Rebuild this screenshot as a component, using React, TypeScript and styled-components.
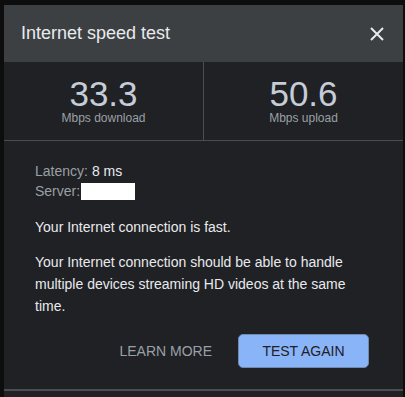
import React from "react";
import styled, { createGlobalStyle } from "styled-components";

const Global = createGlobalStyle`
  html, body { margin: 0; padding: 0; background: #0d0d0e; }
  body { font-family: "Liberation Sans", Arial, sans-serif; overflow: hidden; }
`;

const Page = styled.div`
  width: 405px;
  height: 397px;
  padding: 5px 0 0 4px;
  box-sizing: border-box;
  overflow: hidden;
`;

const Dialog = styled.div`
  width: 399px;
  background: #202124;
  display: flex;
  flex-direction: column;
`;

const Header = styled.div`
  height: 57px;
  background: #3c4043;
  display: flex;
  align-items: center;
  justify-content: space-between;
  padding: 0 14px 0 17px;
  box-sizing: border-box;
`;

const Title = styled.h1`
  margin: 0;
  font-size: 18px;
  font-weight: 400;
  color: #e8eaed;
`;

const Close = styled.button`
  width: 24px;
  height: 24px;
  padding: 0;
  border: 0;
  background: none;
  display: flex;
  align-items: center;
  justify-content: center;
  cursor: pointer;
`;

const Stats = styled.div`
  display: grid;
  grid-template-columns: 200px 1fr;
  border-bottom: 1px solid #4a4d51;
`;

const Stat = styled.div<{ $divider?: boolean }>`
  height: 78px;
  display: flex;
  flex-direction: column;
  align-items: center;
  padding-top: 14px;
  box-sizing: border-box;
  border-right: ${(p) => (p.$divider ? "1px solid #4a4d51" : "0")};
`;

const Value = styled.div`
  font-size: 35px;
  line-height: 36px;
  color: #c5cdd8;
`;

const Unit = styled.div`
  font-size: 12px;
  line-height: 12px;
  color: #9aa0a6;
`;

const Body = styled.div`
  padding: 20px 34px 0 31px;
  display: flex;
  flex-direction: column;
`;

const InfoLine = styled.div`
  font-size: 14px;
  line-height: 20px;
  color: #9aa0a6;
  display: flex;
  align-items: center;
`;

const InfoValue = styled.span`
  color: #e8eaed;
  margin-left: 4px;
`;

const Redacted = styled.span`
  display: inline-block;
  width: 54px;
  height: 17px;
  background: #ffffff;
  margin-left: 1px;
`;

const Para = styled.p`
  margin: 0;
  font-size: 14px;
  line-height: 22px;
  color: #e8eaed;
`;

const FirstPara = styled(Para)`
  margin-top: 15px;
`;

const SecondPara = styled(Para)`
  margin-top: 13px;
`;

const Actions = styled.div`
  display: flex;
  justify-content: flex-end;
  align-items: center;
  gap: 26px;
  margin-top: 17px;
`;

const TextButton = styled.button`
  border: 0;
  background: none;
  padding: 0;
  font-family: inherit;
  font-size: 14px;
  color: #9aa0a6;
  text-transform: uppercase;
  cursor: pointer;
`;

const PrimaryButton = styled.button`
  width: 131px;
  height: 34px;
  border: 1px solid #7089b0;
  border-radius: 5px;
  background: #8ab4f8;
  color: #202124;
  font-family: inherit;
  font-size: 14px;
  text-transform: uppercase;
  cursor: pointer;
`;

const Footer = styled.div`
  margin-top: 21px;
  height: 40px;
  border-top: 2px solid #4a4d51;
`;

export default function App() {
  return (
    <>
      <Global />
      <Page>
        <Dialog>
          <Header>
            <Title>Internet speed test</Title>
            <Close aria-label="Close">
              <svg width="14" height="14" viewBox="0 0 14 14">
                <path d="M1 1L13 13M13 1L1 13" stroke="#e8eaed" strokeWidth="2" />
              </svg>
            </Close>
          </Header>
          <Stats>
            <Stat $divider>
              <Value>33.3</Value>
              <Unit>Mbps download</Unit>
            </Stat>
            <Stat>
              <Value>50.6</Value>
              <Unit>Mbps upload</Unit>
            </Stat>
          </Stats>
          <Body>
            <InfoLine>
              Latency:<InfoValue>8 ms</InfoValue>
            </InfoLine>
            <InfoLine>
              Server:<Redacted />
            </InfoLine>
            <FirstPara>Your Internet connection is fast.</FirstPara>
            <SecondPara>
              Your Internet connection should be able to handle multiple devices streaming HD videos at the same time.
            </SecondPara>
            <Actions>
              <TextButton>Learn more</TextButton>
              <PrimaryButton>Test again</PrimaryButton>
            </Actions>
          </Body>
          <Footer />
        </Dialog>
      </Page>
    </>
  );
}
